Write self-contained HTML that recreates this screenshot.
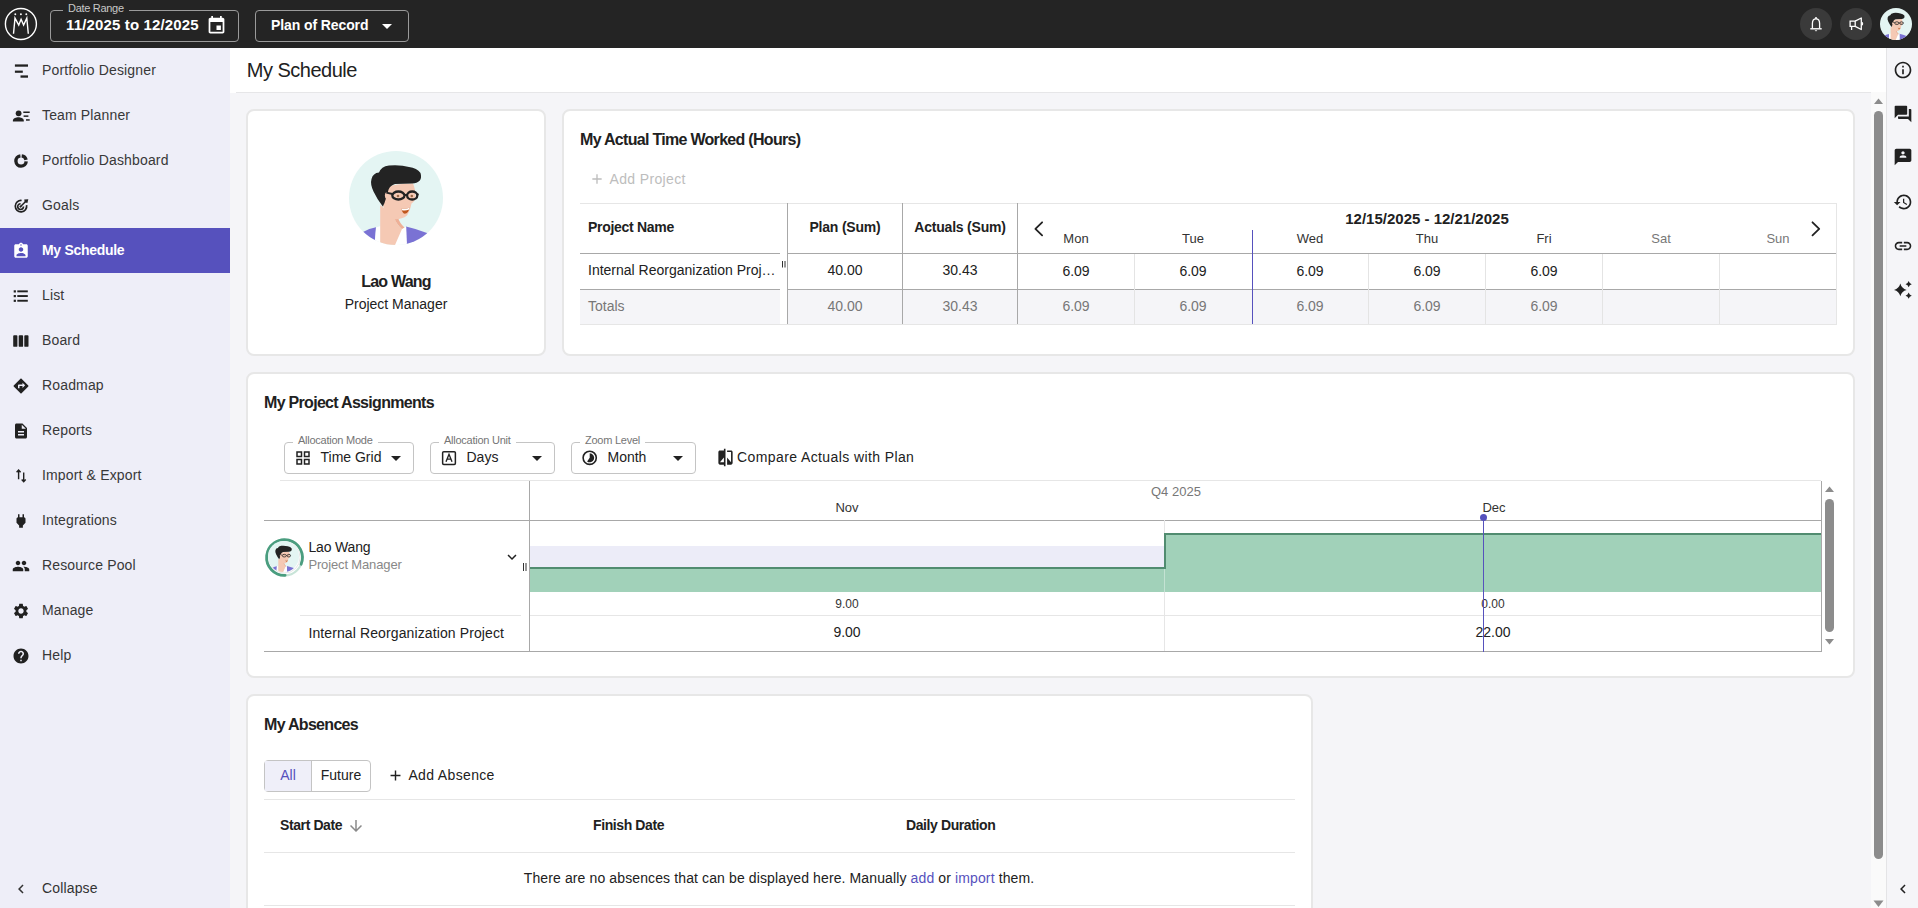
<!DOCTYPE html>
<html><head><meta charset="utf-8"><style>*{box-sizing:border-box;margin:0;padding:0}
html,body{width:1918px;height:908px;overflow:hidden;background:#f5f5f8;font-family:"Liberation Sans",sans-serif;color:#212121}
.a{position:absolute}
.t{position:absolute;line-height:1;white-space:nowrap}
svg{display:block;overflow:visible}
.card{position:absolute;background:#fff;border:2px solid #e7e7e7;border-radius:8px}
</style></head><body>
<div class="a" style="left:0px;top:0px;width:1918px;height:48px;background:#242424"></div>
<div class="a" style="left:0px;top:48px;width:230px;height:860px;background:#eeeef8"></div>
<div class="a" style="left:230px;top:48px;width:1656px;height:45px;background:#fff"></div>
<div class="a" style="left:236px;top:92px;width:1650px;height:1px;background:#e6e6e8"></div>
<div class="a" style="left:1886px;top:48px;width:32px;height:860px;background:#f5f5f8;border-left:1px solid #e4e4e6"></div>
<svg class="a" style="left:4px;top:7px;" width="34" height="34" viewBox="0 0 34 34"><circle cx="16.9" cy="17.06" r="15.5" fill="none" stroke="#fff" stroke-width="1.4"/><circle cx="11.3" cy="7.3" r="0.95" fill="#fff"/><circle cx="16.9" cy="7.3" r="0.95" fill="#fff"/><circle cx="22.3" cy="7.3" r="0.95" fill="#fff"/><path d="M9.5 26.7 L11 11.1 L14.75 18 L17.1 12.3 L19.6 18 L22.8 11.1 L24.3 26.7" fill="none" stroke="#fff" stroke-width="1.4" stroke-linejoin="miter"/></svg>
<div class="a" style="left:50px;top:10px;width:189px;height:32px;border:1px solid #9a9a9a;border-radius:4px"></div>
<div class="a" style="left:63px;top:2px;width:66px;height:12px;background:#242424"></div>
<div class="t" style="left:68px;top:2.69px;font-size:11px;color:#c8c8c8;letter-spacing:-0.3px">Date Range</div>
<div class="t" style="left:66px;top:16.80px;font-size:15px;font-weight:bold;color:#fff;letter-spacing:0.15px">11/2025 to 12/2025</div>
<svg class="a" style="left:206px;top:15px;" width="21" height="21" viewBox="0 0 24 24"><path fill="#fff" d="M17 12h-5v5h5v-5zM16 1v2H8V1H6v2H5c-1.11 0-1.99.9-1.99 2L3 19c0 1.1.89 2 2 2h14c1.1 0 2-.9 2-2V5c0-1.1-.9-2-2-2h-1V1h-2zm3 18H5V8h14v11z"/></svg>
<div class="a" style="left:255px;top:10px;width:154px;height:32px;border:1px solid #9a9a9a;border-radius:4px"></div>
<div class="t" style="left:271px;top:17.55px;font-size:14px;font-weight:bold;color:#fff;letter-spacing:-0.1px">Plan of Record</div>
<svg class="a" style="left:375px;top:14px;" width="24" height="24" viewBox="0 0 24 24"><path fill="#fff" d="M7 10l5 5 5-5z"/></svg>
<div class="a" style="left:1800px;top:8px;width:32px;height:32px;border-radius:50%;background:#3a3a3a"></div>
<div class="a" style="left:1840px;top:8px;width:32px;height:32px;border-radius:50%;background:#3a3a3a"></div>
<svg class="a" style="left:1800px;top:8px;" width="32" height="32" viewBox="0 0 32 32"><path d="M12.4 20.2 V15.6 C12.4 12.9 13.9 10.9 16 10.9 C18.1 10.9 19.6 12.9 19.6 15.6 V20.2" fill="none" stroke="#fff" stroke-width="1.3"/><path d="M10.3 20.8 H21.7" stroke="#fff" stroke-width="1.4"/><circle cx="16" cy="10" r="1" fill="#fff"/><path d="M14.6 22.3 H17.4 L16 23.6Z" fill="#fff"/></svg>
<svg class="a" style="left:1840px;top:8px;" width="32" height="32" viewBox="0 0 32 32"><path d="M10.1 13.2 H15.2 V18.3 H10.1Z" fill="none" stroke="#fff" stroke-width="1.3"/><path d="M15.2 13.2 L21.3 10 V21.5 L15.2 18.3" fill="none" stroke="#fff" stroke-width="1.3" stroke-linejoin="round"/><path d="M11.6 18.3 V22" stroke="#fff" stroke-width="1.3"/><path d="M22.3 14.2 Q23 15.75 22.3 17.3" fill="none" stroke="#fff" stroke-width="1.1"/></svg>
<svg class="a" style="left:1880px;top:8px;" width="32" height="32" viewBox="0 0 94 94"><circle cx="47" cy="47" r="47" fill="#e4f5f3"/>
<clipPath id="clipa1"><circle cx="47" cy="47" r="47"/></clipPath>
<g clip-path="url(#clipa1)">
<path d="M10 94 L14 81 Q20 77.5 27 76.3 L26 94Z" fill="#7a72d4"/>
<path d="M57 75.5 Q68 78 78 82 L86 94 L57 94Z" fill="#7a72d4"/>
<path d="M25.5 94 L27 76.5 L31.5 75 L31.5 94Z" fill="#fff"/>
<path d="M45.5 94 L52.5 77.8 L57.2 75.8 L58 94Z" fill="#fff"/>
<path d="M31.2 94 L31.2 54 L45.4 66 Q47.5 74 53 78 L46 94Z" fill="#f5c9b4"/>
<path d="M45 66 Q47.5 73.5 53 78 L55.5 76.6 Q50.5 72 49 66.5Z" fill="#eeb097"/>
<path d="M39 36 Q46 32.5 64 32.5 Q66.5 38 66.5 46 Q66 50 62.5 52.5 Q61 60 58 64.5 Q53 68.5 45.4 68.2 Q37 64 34 55Z" fill="#f5c9b4"/>
<path d="M33.8 55.5 Q28 48 24.5 40.5 Q21 33 22.5 28 Q24 22 30 21.5 Q32 15.5 40 14.4 Q52 13.5 60 16 Q68 17 71.5 22 Q73 27 70.8 29.5 Q68 32.5 63 32.6 L46 33 Q41 34.5 39.6 38.5 Q37.5 46 35.5 52Z" fill="#232323"/>
<ellipse cx="38.3" cy="44.5" rx="2.4" ry="3.6" fill="#f5c9b4"/>
<ellipse cx="49.4" cy="44.5" rx="6.1" ry="4" fill="none" stroke="#232323" stroke-width="2.3"/>
<ellipse cx="63.2" cy="44.5" rx="5.1" ry="4" fill="none" stroke="#232323" stroke-width="2.3"/>
<path d="M37.3 41.6 L43.5 43 M55.4 44 L58.2 44 M68.2 43.6 L69.6 43.1" stroke="#232323" stroke-width="1.9"/>
<circle cx="49" cy="45" r="1.3" fill="#9a6a48"/><circle cx="62.8" cy="45" r="1.3" fill="#9a6a48"/>
<path d="M52.3 57.2 Q56.5 58.6 60.6 56.6 Q59.6 62.5 55.8 62.8 Q53 62 52.3 57.2Z" fill="#c0571d"/>
<path d="M52.3 57.2 Q56.5 58.6 60.6 56.6 L60.2 58.6 Q56.5 60 52.9 59.2Z" fill="#fff"/>
</g></svg>
<svg class="a" style="left:12px;top:62px;" width="18" height="18" viewBox="0 0 18 18"><rect x="2.9" y="2.4" width="13.1" height="2.3" fill="#212121"/><rect x="2.9" y="8.6" width="7.9" height="2.2" fill="#212121"/><rect x="8.5" y="13.4" width="7.5" height="2.3" fill="#212121"/></svg>
<div class="t" style="left:42px;top:63.15px;font-size:14px;color:#383838;letter-spacing:0.15px">Portfolio Designer</div>
<svg class="a" style="left:12px;top:107px;" width="18" height="18" viewBox="0 0 18 18"><circle cx="6.6" cy="6.3" r="2.9" fill="#212121"/><path d="M0.9 14.6 V13.4 C0.9 11.4 4.3 10.3 6.4 10.3 C8.5 10.3 11.8 11.4 11.8 13.4 V14.6Z" fill="#212121"/><rect x="11.3" y="4.5" width="6.4" height="1.5" fill="#212121"/><rect x="11.6" y="8.4" width="4.8" height="1.5" fill="#212121"/><rect x="14" y="12.2" width="3.7" height="1.5" fill="#212121"/></svg>
<div class="t" style="left:42px;top:108.15px;font-size:14px;color:#383838;letter-spacing:0.15px">Team Planner</div>
<svg class="a" style="left:12px;top:152px;" width="18" height="18" viewBox="0 0 18 18"><path d="M14.19 9.31 A5.15 5.15 0 1 1 8.42 3.84" fill="none" stroke="#212121" stroke-width="3.4"/><path d="M9.68 3.84 A5.15 5.15 0 0 1 14.07 7.79" fill="none" stroke="#212121" stroke-width="3.4"/></svg>
<div class="t" style="left:42px;top:153.15px;font-size:14px;color:#383838;letter-spacing:0.15px">Portfolio Dashboard</div>
<svg class="a" style="left:12px;top:197px;" width="18" height="18" viewBox="0 0 18 18"><path d="M14.6 8.2 A5.7 5.7 0 1 1 9.6 3.5" fill="none" stroke="#212121" stroke-width="1.7"/><path d="M11.5 9.6 A2.9 2.9 0 1 1 8.6 6.7" fill="none" stroke="#212121" stroke-width="1.6"/><circle cx="8.5" cy="9.6" r="1.1" fill="#212121"/><path d="M8.6 9.5 L13.6 4.5" stroke="#212121" stroke-width="1.5"/><path d="M12.2 2.6 L12.8 5.3 L15.4 5.9 L16.3 2.2Z" fill="#212121"/></svg>
<div class="t" style="left:42px;top:198.15px;font-size:14px;color:#383838;letter-spacing:0.15px">Goals</div>
<div class="a" style="left:0px;top:228px;width:230px;height:45px;background:#5651bd"></div>
<svg class="a" style="left:12px;top:242px;" width="18" height="18" viewBox="0 0 24 24"><path fill="#fff" d="M19 3h-4.18C14.4 1.84 13.3 1 12 1c-1.3 0-2.4.84-2.82 2H5c-1.1 0-2 .9-2 2v14c0 1.1.9 2 2 2h14c1.1 0 2-.9 2-2V5c0-1.1-.9-2-2-2zm-7 0c.55 0 1 .45 1 1s-.45 1-1 1-1-.45-1-1 .45-1 1-1zm0 4c1.66 0 3 1.34 3 3s-1.34 3-3 3-3-1.34-3-3 1.34-3 3-3zm6 12H6v-1.4c0-2 4-3.1 6-3.1s6 1.1 6 3.1V19z"/></svg>
<div class="t" style="left:42px;top:243.15px;font-size:14px;color:#fff;font-weight:bold;letter-spacing:-0.3px">My Schedule</div>
<svg class="a" style="left:12px;top:287px;" width="18" height="18" viewBox="0 0 18 18"><rect x="1.7" y="3.3" width="2.2" height="2.2" fill="#212121"/><rect x="1.7" y="8" width="2.2" height="2.2" fill="#212121"/><rect x="1.7" y="12.7" width="2.2" height="2.2" fill="#212121"/><rect x="5.3" y="3.4" width="10.5" height="1.9" fill="#212121"/><rect x="5.3" y="8.1" width="10.5" height="1.9" fill="#212121"/><rect x="5.3" y="12.8" width="10.5" height="1.9" fill="#212121"/></svg>
<div class="t" style="left:42px;top:288.15px;font-size:14px;color:#383838;letter-spacing:0.15px">List</div>
<svg class="a" style="left:12px;top:332px;" width="18" height="18" viewBox="0 0 18 18"><rect x="1.2" y="3.2" width="4.2" height="11.6" rx="0.9" fill="#212121"/><rect x="6.7" y="3.2" width="4.4" height="11.6" rx="0.9" fill="#212121"/><rect x="12.3" y="3.2" width="4.2" height="11.6" rx="0.9" fill="#212121"/></svg>
<div class="t" style="left:42px;top:333.15px;font-size:14px;color:#383838;letter-spacing:0.15px">Board</div>
<svg class="a" style="left:12px;top:377px;" width="18" height="18" viewBox="0 0 24 24"><path fill="#212121" d="M21.71 11.29l-9-9c-.39-.39-1.02-.39-1.41 0l-9 9c-.39.39-.39 1.02 0 1.41l9 9c.39.39 1.02.39 1.41 0l9-9c.39-.38.39-1.01 0-1.41zM14 14.5V12h-4v3H8v-4c0-.55.45-1 1-1h5V7.5l3.5 3.5-3.5 3.5z"/></svg>
<div class="t" style="left:42px;top:378.15px;font-size:14px;color:#383838;letter-spacing:0.15px">Roadmap</div>
<svg class="a" style="left:12px;top:422px;" width="18" height="18" viewBox="0 0 24 24"><path fill="#212121" d="M14 2H6c-1.1 0-1.99.9-1.99 2L4 20c0 1.1.89 2 1.99 2H18c1.1 0 2-.9 2-2V8l-6-6zm2 16H8v-2h8v2zm0-4H8v-2h8v2zm-3-5V3.5L18.5 9H13z"/></svg>
<div class="t" style="left:42px;top:423.15px;font-size:14px;color:#383838;letter-spacing:0.15px">Reports</div>
<svg class="a" style="left:12px;top:467px;" width="18" height="18" viewBox="0 0 18 18"><path d="M6.6 12.3 V3.2 M4.6 5.3 L6.6 3.1 L8.6 5.3 M11.7 5.6 V14.6 M9.7 12.5 L11.7 14.7 L13.7 12.5" fill="none" stroke="#212121" stroke-width="1.4"/></svg>
<div class="t" style="left:42px;top:468.15px;font-size:14px;color:#383838;letter-spacing:0.15px">Import &amp; Export</div>
<svg class="a" style="left:12px;top:512px;" width="18" height="18" viewBox="0 0 24 24"><path fill="#212121" d="M16.01 7L16 3h-2v4h-4V3H8v4h-.01C7 6.99 6 7.99 6 8.99v5.49L9.5 18v3h5v-3l3.5-3.51v-5.5c0-1-1-2-1.99-1.99z"/></svg>
<div class="t" style="left:42px;top:513.15px;font-size:14px;color:#383838;letter-spacing:0.15px">Integrations</div>
<svg class="a" style="left:12px;top:557px;" width="18" height="18" viewBox="0 0 24 24"><path fill="#212121" d="M16 11c1.66 0 2.99-1.34 2.99-3S17.66 5 16 5c-1.66 0-3 1.34-3 3s1.34 3 3 3zm-8 0c1.66 0 2.99-1.34 2.99-3S9.66 5 8 5C6.34 5 5 6.34 5 8s1.34 3 3 3zm0 2c-2.33 0-7 1.17-7 3.5V19h14v-2.5c0-2.33-4.67-3.5-7-3.5zm8 0c-.29 0-.62.02-.97.05 1.16.84 1.97 1.97 1.97 3.45V19h6v-2.5c0-2.33-4.67-3.5-7-3.5z"/></svg>
<div class="t" style="left:42px;top:558.15px;font-size:14px;color:#383838;letter-spacing:0.15px">Resource Pool</div>
<svg class="a" style="left:12px;top:602px;" width="18" height="18" viewBox="0 0 24 24"><path fill="#212121" d="M19.14 12.94c.04-.3.06-.61.06-.94 0-.32-.02-.64-.07-.94l2.03-1.58c.18-.14.23-.41.12-.61l-1.92-3.32c-.12-.22-.37-.29-.59-.22l-2.39.96c-.5-.38-1.03-.7-1.62-.94l-.36-2.54c-.04-.24-.24-.41-.48-.41h-3.84c-.24 0-.43.17-.47.41l-.36 2.54c-.59.24-1.13.57-1.62.94l-2.39-.96c-.22-.08-.47 0-.59.22L2.74 8.87c-.12.21-.08.47.12.61l2.03 1.58c-.05.3-.09.63-.09.94s.02.64.07.94l-2.03 1.58c-.18.14-.23.41-.12.61l1.92 3.32c.12.22.37.29.59.22l2.39-.96c.5.38 1.03.7 1.62.94l.36 2.54c.05.24.24.41.48.41h3.84c.24 0 .44-.17.47-.41l.36-2.54c.59-.24 1.13-.56 1.62-.94l2.39.96c.22.08.47 0 .59-.22l1.92-3.32c.12-.22.07-.47-.12-.61l-2.01-1.58zM12 15.6c-1.98 0-3.6-1.62-3.6-3.6s1.62-3.6 3.6-3.6 3.6 1.62 3.6 3.6-1.62 3.6-3.6 3.6z"/></svg>
<div class="t" style="left:42px;top:603.15px;font-size:14px;color:#383838;letter-spacing:0.15px">Manage</div>
<svg class="a" style="left:12px;top:647px;" width="18" height="18" viewBox="0 0 24 24"><path fill="#212121" d="M12 2C6.48 2 2 6.48 2 12s4.48 10 10 10 10-4.48 10-10S17.52 2 12 2zm1 17h-2v-2h2v2zm2.07-7.75l-.9.92C13.45 12.9 13 13.5 13 15h-2v-.5c0-1.1.45-2.1 1.17-2.83l1.24-1.26c.37-.36.59-.86.59-1.41 0-1.1-.9-2-2-2s-2 .9-2 2H8c0-2.21 1.79-4 4-4s4 1.79 4 4c0 .88-.36 1.680-.93 2.25z"/></svg>
<div class="t" style="left:42px;top:648.15px;font-size:14px;color:#383838;letter-spacing:0.15px">Help</div>
<svg class="a" style="left:12px;top:880px;" width="18" height="18" viewBox="0 0 24 24"><path fill="#333" d="M15.41 7.41L14 6l-6 6 6 6 1.41-1.41L10.83 12z"/></svg>
<div class="t" style="left:42px;top:880.75px;font-size:14px;color:#333;letter-spacing:0.15px">Collapse</div>
<div class="t" style="left:246.8px;top:59.87px;font-size:20px;color:#212121;letter-spacing:-0.5px">My Schedule</div>
<div class="a" style="left:1871px;top:92px;width:15px;height:816px;background:#fafafa"></div>
<div class="a" style="left:1874px;top:111px;width:9px;height:748px;background:#8c8c8c;border-radius:5px"></div>
<svg class="a" style="left:1873px;top:97px;" width="11" height="8" viewBox="0 0 11 8"><path d="M1 7 L5.5 1.5 L10 7Z" fill="#8c8c8c"/></svg>
<svg class="a" style="left:1873px;top:900px;" width="11" height="8" viewBox="0 0 11 8"><path d="M0.5 0.5 L5.5 7 L10.5 0.5Z" fill="#8c8c8c"/></svg>
<svg class="a" style="left:1893px;top:60px;" width="20" height="20" viewBox="0 0 24 24"><path fill="#212121" d="M11 7h2v2h-2zm0 4h2v6h-2zm1-9C6.48 2 2 6.48 2 12s4.48 10 10 10 10-4.48 10-10S17.52 2 12 2zm0 18c-4.41 0-8-3.59-8-8s3.59-8 8-8 8 3.59 8 8-3.59 8-8 8z"/></svg>
<svg class="a" style="left:1893px;top:104px;" width="20" height="20" viewBox="0 0 24 24"><path fill="#212121" d="M21 6h-2v9H6v2c0 .55.45 1 1 1h11l4 4V7c0-.55-.45-1-1-1zm-4 6V3c0-.55-.45-1-1-1H3c-.55 0-1 .45-1 1v14l4-4h10c.55 0 1-.45 1-1z"/></svg>
<svg class="a" style="left:1893px;top:147px;" width="20" height="20" viewBox="0 0 24 24"><path fill="#212121" d="M20 2H4.01c-1.1 0-2 .9-2 2v18l4-4h14c1.1 0 2-.9 2-2V4c0-1.1-.9-2-2-2zm-8 3c1.1 0 2 .9 2 2s-.9 2-2 2-2-.9-2-2 .9-2 2-2zm4 8H8v-.57c0-.81.48-1.530 1.22-1.85.85-.37 1.79-.58 2.78-.58.99 0 1.93.21 2.78.58.74.32 1.22 1.04 1.22 1.85V13z"/></svg>
<svg class="a" style="left:1893px;top:192px;" width="20" height="20" viewBox="0 0 24 24"><path fill="#212121" d="M13 3c-4.97 0-9 4.03-9 9H1l3.89 3.89.07.14L9 12H6c0-3.87 3.13-7 7-7s7 3.13 7 7-3.13 7-7 7c-1.93 0-3.68-.79-4.94-2.060l-1.42 1.42C8.27 19.99 10.51 21 13 21c4.97 0 9-4.03 9-9s-4.03-9-9-9zm-1 5v5l4.28 2.54.72-1.21-3.5-2.08V8H12z"/></svg>
<svg class="a" style="left:1893px;top:236px;" width="20" height="20" viewBox="0 0 24 24"><path fill="#212121" d="M3.9 12c0-1.71 1.39-3.1 3.1-3.1h4V7H7c-2.76 0-5 2.24-5 5s2.24 5 5 5h4v-1.9H7c-1.71 0-3.1-1.39-3.1-3.1zM8 13h8v-2H8v2zm9-6h-4v1.9h4c1.71 0 3.1 1.39 3.1 3.1s-1.39 3.1-3.1 3.1h-4V17h4c2.76 0 5-2.24 5-5s-2.24-5-5-5z"/></svg>
<svg class="a" style="left:1888px;top:276px;" width="30" height="28" viewBox="0 0 30 28"><path fill="#212121" d="M12.33 7.60 Q13.59 12.64 18.63 13.90 Q13.59 15.16 12.33 20.20 Q11.07 15.16 6.03 13.90 Q11.07 12.64 12.33 7.60ZM20.66 5.07 Q21.34 7.49 23.76 8.17 Q21.34 8.85 20.66 11.27 Q19.98 8.85 17.56 8.17 Q19.98 7.49 20.66 5.07ZM20.66 16.60 Q21.34 19.02 23.76 19.70 Q21.34 20.38 20.66 22.80 Q19.98 20.38 17.56 19.70 Q19.98 19.02 20.66 16.60Z"/></svg>
<svg class="a" style="left:1894px;top:880px;" width="18" height="18" viewBox="0 0 24 24"><path fill="#212121" d="M15.41 7.41L14 6l-6 6 6 6 1.41-1.41L10.83 12z"/></svg>
<div class="card" style="left:246px;top:109px;width:300px;height:247px"></div>
<svg class="a" style="left:349px;top:151px;" width="94" height="94" viewBox="0 0 94 94"><circle cx="47" cy="47" r="47" fill="#e4f5f3"/>
<clipPath id="clipa2"><circle cx="47" cy="47" r="47"/></clipPath>
<g clip-path="url(#clipa2)">
<path d="M10 94 L14 81 Q20 77.5 27 76.3 L26 94Z" fill="#7a72d4"/>
<path d="M57 75.5 Q68 78 78 82 L86 94 L57 94Z" fill="#7a72d4"/>
<path d="M25.5 94 L27 76.5 L31.5 75 L31.5 94Z" fill="#fff"/>
<path d="M45.5 94 L52.5 77.8 L57.2 75.8 L58 94Z" fill="#fff"/>
<path d="M31.2 94 L31.2 54 L45.4 66 Q47.5 74 53 78 L46 94Z" fill="#f5c9b4"/>
<path d="M45 66 Q47.5 73.5 53 78 L55.5 76.6 Q50.5 72 49 66.5Z" fill="#eeb097"/>
<path d="M39 36 Q46 32.5 64 32.5 Q66.5 38 66.5 46 Q66 50 62.5 52.5 Q61 60 58 64.5 Q53 68.5 45.4 68.2 Q37 64 34 55Z" fill="#f5c9b4"/>
<path d="M33.8 55.5 Q28 48 24.5 40.5 Q21 33 22.5 28 Q24 22 30 21.5 Q32 15.5 40 14.4 Q52 13.5 60 16 Q68 17 71.5 22 Q73 27 70.8 29.5 Q68 32.5 63 32.6 L46 33 Q41 34.5 39.6 38.5 Q37.5 46 35.5 52Z" fill="#232323"/>
<ellipse cx="38.3" cy="44.5" rx="2.4" ry="3.6" fill="#f5c9b4"/>
<ellipse cx="49.4" cy="44.5" rx="6.1" ry="4" fill="none" stroke="#232323" stroke-width="2.3"/>
<ellipse cx="63.2" cy="44.5" rx="5.1" ry="4" fill="none" stroke="#232323" stroke-width="2.3"/>
<path d="M37.3 41.6 L43.5 43 M55.4 44 L58.2 44 M68.2 43.6 L69.6 43.1" stroke="#232323" stroke-width="1.9"/>
<circle cx="49" cy="45" r="1.3" fill="#9a6a48"/><circle cx="62.8" cy="45" r="1.3" fill="#9a6a48"/>
<path d="M52.3 57.2 Q56.5 58.6 60.6 56.6 Q59.6 62.5 55.8 62.8 Q53 62 52.3 57.2Z" fill="#c0571d"/>
<path d="M52.3 57.2 Q56.5 58.6 60.6 56.6 L60.2 58.6 Q56.5 60 52.9 59.2Z" fill="#fff"/>
</g></svg>
<div class="t" style="left:296.0px;width:200px;text-align:center;top:273.96px;font-size:16px;font-weight:bold;letter-spacing:-0.8px">Lao Wang</div>
<div class="t" style="left:296.0px;width:200px;text-align:center;top:296.75px;font-size:14px;color:#212121">Project Manager</div>
<div class="card" style="left:562px;top:109px;width:1293px;height:247px"></div>
<div class="t" style="left:580px;top:132.26px;font-size:16px;font-weight:bold;letter-spacing:-0.7px">My Actual Time Worked (Hours)</div>
<svg class="a" style="left:589px;top:171px;" width="16" height="16" viewBox="0 0 24 24"><path fill="#bdbdbd" d="M19 13h-6v6h-2v-6H5v-2h6V5h2v6h6v2z"/></svg>
<div class="t" style="left:609.5px;top:172.15px;font-size:14px;color:#bdbdbd;letter-spacing:0.35px">Add Project</div>
<div class="a" style="left:580px;top:203px;width:1257px;height:1px;background:#e6e6e6"></div>
<div class="a" style="left:580px;top:290px;width:200px;height:34px;background:#f5f5f8"></div>
<div class="a" style="left:788px;top:290px;width:1049px;height:34px;background:#f5f5f8"></div>
<div class="a" style="left:580px;top:253px;width:200px;height:1px;background:#a8a8a8"></div>
<div class="a" style="left:580px;top:289px;width:200px;height:1px;background:#a8a8a8"></div>
<div class="a" style="left:787px;top:253px;width:1050px;height:1px;background:#a8a8a8"></div>
<div class="a" style="left:787px;top:289px;width:1050px;height:1px;background:#a8a8a8"></div>
<div class="a" style="left:580px;top:324px;width:1257px;height:1px;background:#e6e6e6"></div>
<div class="a" style="left:787px;top:203px;width:1px;height:121px;background:#a8a8a8"></div>
<div class="a" style="left:902px;top:203px;width:1px;height:121px;background:#a8a8a8"></div>
<div class="a" style="left:1017px;top:203px;width:1px;height:121px;background:#a8a8a8"></div>
<div class="a" style="left:1836px;top:203px;width:1px;height:122px;background:#e6e6e6"></div>
<div class="a" style="left:1134px;top:254px;width:1px;height:70px;background:#e4e4e4"></div>
<div class="a" style="left:1368px;top:254px;width:1px;height:70px;background:#e4e4e4"></div>
<div class="a" style="left:1485px;top:254px;width:1px;height:70px;background:#e4e4e4"></div>
<div class="a" style="left:1602px;top:254px;width:1px;height:70px;background:#e4e4e4"></div>
<div class="a" style="left:1719px;top:254px;width:1px;height:70px;background:#e4e4e4"></div>
<div class="a" style="left:1252px;top:230px;width:1px;height:94px;background:#5651bd"></div>
<div class="t" style="left:588px;top:220.15px;font-size:14px;font-weight:bold;letter-spacing:-0.3px">Project Name</div>
<div class="t" style="left:745.0px;width:200px;text-align:center;top:220.15px;font-size:14px;font-weight:bold;letter-spacing:-0.2px">Plan (Sum)</div>
<div class="t" style="left:860.0px;width:200px;text-align:center;top:220.15px;font-size:14px;font-weight:bold;letter-spacing:-0.2px">Actuals (Sum)</div>
<div class="t" style="left:588px;top:263.15px;font-size:14px;">Internal Reorganization Proj…</div>
<svg class="a" style="left:782px;top:260.5px;" width="4" height="7" viewBox="0 0 4 7"><rect x="0" y="0" width="1" height="6.5" fill="#333"/><rect x="2.5" y="0" width="1" height="6.5" fill="#333"/></svg>
<div class="t" style="left:745.0px;width:200px;text-align:center;top:263.15px;font-size:14px;">40.00</div>
<div class="t" style="left:860.0px;width:200px;text-align:center;top:263.15px;font-size:14px;">30.43</div>
<div class="t" style="left:588px;top:299.15px;font-size:14px;color:#777">Totals</div>
<div class="t" style="left:745.0px;width:200px;text-align:center;top:299.15px;font-size:14px;color:#777">40.00</div>
<div class="t" style="left:860.0px;width:200px;text-align:center;top:299.15px;font-size:14px;color:#777">30.43</div>
<svg class="a" style="left:1026px;top:212px;" width="30" height="30" viewBox="0 0 30 30"><path d="M16.1 10.3 L9.4 16.9 L16.1 23.4" fill="none" stroke="#212121" stroke-width="1.8" stroke-linecap="round" stroke-linejoin="round"/></svg>
<svg class="a" style="left:1800px;top:212px;" width="30" height="30" viewBox="0 0 30 30"><path d="M12.5 10.3 L19.2 16.9 L12.5 23.4" fill="none" stroke="#212121" stroke-width="1.8" stroke-linecap="round" stroke-linejoin="round"/></svg>
<div class="t" style="left:1277.0px;width:300px;text-align:center;top:210.90px;font-size:15px;font-weight:bold">12/15/2025 - 12/21/2025</div>
<div class="t" style="left:976.0px;width:200px;text-align:center;top:232.20px;font-size:13px;color:#333">Mon</div>
<div class="t" style="left:976.0px;width:200px;text-align:center;top:264.15px;font-size:14px;">6.09</div>
<div class="t" style="left:976.0px;width:200px;text-align:center;top:299.15px;font-size:14px;color:#777">6.09</div>
<div class="t" style="left:1093.0px;width:200px;text-align:center;top:232.20px;font-size:13px;color:#333">Tue</div>
<div class="t" style="left:1093.0px;width:200px;text-align:center;top:264.15px;font-size:14px;">6.09</div>
<div class="t" style="left:1093.0px;width:200px;text-align:center;top:299.15px;font-size:14px;color:#777">6.09</div>
<div class="t" style="left:1210.0px;width:200px;text-align:center;top:232.20px;font-size:13px;color:#333">Wed</div>
<div class="t" style="left:1210.0px;width:200px;text-align:center;top:264.15px;font-size:14px;">6.09</div>
<div class="t" style="left:1210.0px;width:200px;text-align:center;top:299.15px;font-size:14px;color:#777">6.09</div>
<div class="t" style="left:1327.0px;width:200px;text-align:center;top:232.20px;font-size:13px;color:#333">Thu</div>
<div class="t" style="left:1327.0px;width:200px;text-align:center;top:264.15px;font-size:14px;">6.09</div>
<div class="t" style="left:1327.0px;width:200px;text-align:center;top:299.15px;font-size:14px;color:#777">6.09</div>
<div class="t" style="left:1444.0px;width:200px;text-align:center;top:232.20px;font-size:13px;color:#333">Fri</div>
<div class="t" style="left:1444.0px;width:200px;text-align:center;top:264.15px;font-size:14px;">6.09</div>
<div class="t" style="left:1444.0px;width:200px;text-align:center;top:299.15px;font-size:14px;color:#777">6.09</div>
<div class="t" style="left:1561.0px;width:200px;text-align:center;top:232.20px;font-size:13px;color:#777">Sat</div>
<div class="t" style="left:1678.0px;width:200px;text-align:center;top:232.20px;font-size:13px;color:#777">Sun</div>
<div class="card" style="left:246px;top:372px;width:1609px;height:306px"></div>
<div class="t" style="left:264px;top:394.76px;font-size:16px;font-weight:bold;letter-spacing:-0.7px">My Project Assignments</div>
<div class="a" style="left:284px;top:442px;width:130px;height:32px;border:1px solid #c4c4c4;border-radius:4px"></div><div class="a" style="left:293px;top:436px;width:84.5625px;height:8px;background:#fff"></div><div class="t" style="left:298px;top:434.59px;font-size:11px;color:#757575;letter-spacing:-0.25px">Allocation Mode</div><svg class="a" style="left:294px;top:449px;" width="18" height="18" viewBox="0 0 24 24"><path fill="#212121" d="M3 3v8h8V3H3zm6 6H5V5h4v4zm-6 4v8h8v-8H3zm6 6H5v-4h4v4zm4-16v8h8V3h-8zm6 6h-4V5h4v4zm-6 4v8h8v-8h-8zm6 6h-4v-4h4v4z"/></svg><div class="t" style="left:320.5px;top:450.35px;font-size:14px;color:#212121">Time Grid</div><svg class="a" style="left:383.5px;top:446.2px;" width="24" height="24" viewBox="0 0 24 24"><path fill="#212121" d="M7 10l5 5 5-5z"/></svg>
<div class="a" style="left:430px;top:442px;width:125px;height:32px;border:1px solid #c4c4c4;border-radius:4px"></div><div class="a" style="left:439px;top:436px;width:76.59375px;height:8px;background:#fff"></div><div class="t" style="left:444px;top:434.59px;font-size:11px;color:#757575;letter-spacing:-0.25px">Allocation Unit</div><svg class="a" style="left:440px;top:449px;" width="18" height="18" viewBox="0 0 24 24"><rect x="3.5" y="3.5" width="17" height="17" rx="1.5" fill="none" stroke="#212121" stroke-width="2"/><path d="M8 17 L12 7 L16 17 M9.5 13.5 H14.5" fill="none" stroke="#212121" stroke-width="1.8"/></svg><div class="t" style="left:466.5px;top:450.35px;font-size:14px;color:#212121">Days</div><svg class="a" style="left:524.5px;top:446.2px;" width="24" height="24" viewBox="0 0 24 24"><path fill="#212121" d="M7 10l5 5 5-5z"/></svg>
<div class="a" style="left:571px;top:442px;width:125px;height:32px;border:1px solid #c4c4c4;border-radius:4px"></div><div class="a" style="left:580px;top:436px;width:65.0px;height:8px;background:#fff"></div><div class="t" style="left:585px;top:434.59px;font-size:11px;color:#757575;letter-spacing:-0.25px">Zoom Level</div><svg class="a" style="left:581px;top:449px;" width="18" height="18" viewBox="0 0 18 18"><circle cx="8.7" cy="8.8" r="6.6" fill="none" stroke="#212121" stroke-width="1.6"/><path d="M8.7 8.8 L8.7 4.3 A4.5 4.5 0 1 1 6.12 12.49Z" fill="#212121"/></svg><div class="t" style="left:607.5px;top:450.35px;font-size:14px;color:#212121">Month</div><svg class="a" style="left:665.5px;top:446.2px;" width="24" height="24" viewBox="0 0 24 24"><path fill="#212121" d="M7 10l5 5 5-5z"/></svg>
<svg class="a" style="left:716px;top:448px;" width="19" height="19" viewBox="0 0 24 24"><path fill="#212121" d="M10 3H5c-1.11 0-2 .9-2 2v14c0 1.1.89 2 2 2h5v2h2V1h-2v2zm0 15H5l5-6v6zm9-15h-5v2h5v13l-5-6v9h5c1.1 0 2-.9 2-2V5c0-1.1-.9-2-2-2z"/></svg>
<div class="t" style="left:737px;top:449.95px;font-size:14px;color:#212121;letter-spacing:0.4px">Compare Actuals with Plan</div>
<div class="a" style="left:280px;top:480px;width:1541px;height:1px;background:#e6e6e6"></div>
<div class="a" style="left:529px;top:481px;width:1px;height:171px;background:#a8a8a8"></div>
<div class="a" style="left:264px;top:520px;width:1557px;height:1px;background:#a8a8a8"></div>
<div class="a" style="left:264px;top:651px;width:1557px;height:1px;background:#a8a8a8"></div>
<div class="a" style="left:1821px;top:481px;width:1px;height:171px;background:#a8a8a8"></div>
<div class="t" style="left:1151px;top:485.30px;font-size:13px;color:#777">Q4 2025</div>
<div class="t" style="left:747.0px;width:200px;text-align:center;top:500.80px;font-size:13px;color:#333">Nov</div>
<div class="t" style="left:1394.0px;width:200px;text-align:center;top:500.50px;font-size:13px;color:#333">Dec</div>
<div class="a" style="left:530px;top:546px;width:634px;height:21px;background:#ececf8"></div>
<div class="a" style="left:530px;top:567px;width:634px;height:25px;background:#a1d1b9;border-top:2px solid #518c70"></div>
<div class="a" style="left:1164px;top:533px;width:657px;height:59px;background:#a1d1b9;border-top:2px solid #518c70"></div>
<div class="a" style="left:1164px;top:520px;width:1px;height:131px;background:#e6e6e6"></div>
<div class="a" style="left:1164px;top:567px;width:1px;height:25px;background:#c4e2d3"></div>
<div class="a" style="left:1164px;top:533px;width:2px;height:36px;background:#518c70"></div>
<div class="a" style="left:300px;top:615px;width:221px;height:1px;background:#e6e6e6"></div>
<div class="a" style="left:530px;top:615px;width:1291px;height:1px;background:#e6e6e6"></div>
<div class="t" style="left:747.0px;width:200px;text-align:center;top:597.74px;font-size:12px;color:#333">9.00</div>
<div class="t" style="left:1393.0px;width:200px;text-align:center;top:597.74px;font-size:12px;color:#333">0.00</div>
<div class="t" style="left:747.0px;width:200px;text-align:center;top:625.45px;font-size:14px;">9.00</div>
<div class="t" style="left:1393.0px;width:200px;text-align:center;top:625.45px;font-size:14px;">22.00</div>
<div class="a" style="left:1483px;top:517px;width:1px;height:135px;background:#5651bd"></div>
<div class="a" style="left:1480px;top:514px;width:7px;height:7px;background:#5651bd;border-radius:50%"></div>
<svg class="a" style="left:264.5px;top:537.5px;" width="39" height="39" viewBox="0 0 39 39"><circle cx="19.5" cy="19.5" r="19" fill="#fff"/><circle cx="19.5" cy="19.5" r="17.9" fill="none" stroke="#c8e4d8" stroke-width="2.2"/><path d="M20.12 37.39 A17.9 17.9 0 1 1 36.10 26.21" fill="none" stroke="#4a9d7f" stroke-width="2.8" stroke-linecap="round"/><circle cx="19.5" cy="19.5" r="15.6" fill="none" stroke="#e0e0e0" stroke-width="0.8"/></svg>
<svg class="a" style="left:268px;top:541px;" width="31" height="31" viewBox="0 0 94 94"><circle cx="47" cy="47" r="47" fill="#e4f5f3"/>
<clipPath id="clipa3"><circle cx="47" cy="47" r="47"/></clipPath>
<g clip-path="url(#clipa3)">
<path d="M10 94 L14 81 Q20 77.5 27 76.3 L26 94Z" fill="#7a72d4"/>
<path d="M57 75.5 Q68 78 78 82 L86 94 L57 94Z" fill="#7a72d4"/>
<path d="M25.5 94 L27 76.5 L31.5 75 L31.5 94Z" fill="#fff"/>
<path d="M45.5 94 L52.5 77.8 L57.2 75.8 L58 94Z" fill="#fff"/>
<path d="M31.2 94 L31.2 54 L45.4 66 Q47.5 74 53 78 L46 94Z" fill="#f5c9b4"/>
<path d="M45 66 Q47.5 73.5 53 78 L55.5 76.6 Q50.5 72 49 66.5Z" fill="#eeb097"/>
<path d="M39 36 Q46 32.5 64 32.5 Q66.5 38 66.5 46 Q66 50 62.5 52.5 Q61 60 58 64.5 Q53 68.5 45.4 68.2 Q37 64 34 55Z" fill="#f5c9b4"/>
<path d="M33.8 55.5 Q28 48 24.5 40.5 Q21 33 22.5 28 Q24 22 30 21.5 Q32 15.5 40 14.4 Q52 13.5 60 16 Q68 17 71.5 22 Q73 27 70.8 29.5 Q68 32.5 63 32.6 L46 33 Q41 34.5 39.6 38.5 Q37.5 46 35.5 52Z" fill="#232323"/>
<ellipse cx="38.3" cy="44.5" rx="2.4" ry="3.6" fill="#f5c9b4"/>
<ellipse cx="49.4" cy="44.5" rx="6.1" ry="4" fill="none" stroke="#232323" stroke-width="2.3"/>
<ellipse cx="63.2" cy="44.5" rx="5.1" ry="4" fill="none" stroke="#232323" stroke-width="2.3"/>
<path d="M37.3 41.6 L43.5 43 M55.4 44 L58.2 44 M68.2 43.6 L69.6 43.1" stroke="#232323" stroke-width="1.9"/>
<circle cx="49" cy="45" r="1.3" fill="#9a6a48"/><circle cx="62.8" cy="45" r="1.3" fill="#9a6a48"/>
<path d="M52.3 57.2 Q56.5 58.6 60.6 56.6 Q59.6 62.5 55.8 62.8 Q53 62 52.3 57.2Z" fill="#c0571d"/>
<path d="M52.3 57.2 Q56.5 58.6 60.6 56.6 L60.2 58.6 Q56.5 60 52.9 59.2Z" fill="#fff"/>
</g></svg>
<div class="t" style="left:308.4px;top:539.75px;font-size:14px;color:#212121;letter-spacing:-0.15px">Lao Wang</div>
<div class="t" style="left:308.4px;top:558.00px;font-size:13px;color:#888;letter-spacing:-0.14px">Project Manager</div>
<svg class="a" style="left:503px;top:548px;" width="18" height="18" viewBox="0 0 24 24"><path fill="#212121" d="M16.59 8.59L12 13.17 7.41 8.59 6 10l6 6 6-6z"/></svg>
<svg class="a" style="left:523px;top:563px;" width="4" height="8" viewBox="0 0 4 8"><rect x="0" y="0" width="1" height="8" fill="#333"/><rect x="2.5" y="0" width="1" height="8" fill="#333"/></svg>
<div class="t" style="left:308.4px;top:625.95px;font-size:14px;letter-spacing:0.11px">Internal Reorganization Project</div>
<div class="a" style="left:1825px;top:499px;width:9px;height:133px;background:#8c8c8c;border-radius:5px"></div>
<svg class="a" style="left:1824px;top:485px;" width="11" height="8" viewBox="0 0 11 8"><path d="M1 7 L5.5 1.5 L10 7Z" fill="#8c8c8c"/></svg>
<svg class="a" style="left:1824px;top:638px;" width="11" height="8" viewBox="0 0 11 8"><path d="M1 1 L5.5 6.5 L10 1Z" fill="#8c8c8c"/></svg>
<div class="card" style="left:246px;top:694px;width:1067px;height:240px"></div>
<div class="t" style="left:264px;top:716.96px;font-size:16px;font-weight:bold;letter-spacing:-0.7px">My Absences</div>
<div class="a" style="left:264px;top:760px;width:107px;height:32px;border:1px solid #c4c4c4;border-radius:4px"></div>
<div class="a" style="left:265px;top:761px;width:46px;height:30px;background:#efeff9"></div>
<div class="a" style="left:311px;top:761px;width:1px;height:30px;background:#c4c4c4"></div>
<div class="t" style="left:188.0px;width:200px;text-align:center;top:768.15px;font-size:14px;color:#5651bd">All</div>
<div class="t" style="left:241.0px;width:200px;text-align:center;top:768.15px;font-size:14px;color:#212121">Future</div>
<svg class="a" style="left:387px;top:767px;" width="17" height="17" viewBox="0 0 24 24"><path fill="#212121" d="M19 13h-6v6h-2v-6H5v-2h6V5h2v6h6v2z"/></svg>
<div class="t" style="left:408.4px;top:768.15px;font-size:14px;letter-spacing:0.35px">Add Absence</div>
<div class="a" style="left:264px;top:799px;width:1031px;height:1px;background:#e6e6e6"></div>
<div class="t" style="left:280px;top:818.15px;font-size:14px;font-weight:bold;letter-spacing:-0.4px">Start Date</div>
<svg class="a" style="left:347px;top:817px;" width="18" height="18" viewBox="0 0 24 24"><path fill="#8a8a8a" d="M20 12l-1.41-1.41L13 16.17V4h-2v12.17l-5.58-5.59L4 12l8 8 8-8z"/></svg>
<div class="t" style="left:593px;top:818.15px;font-size:14px;font-weight:bold;letter-spacing:-0.4px">Finish Date</div>
<div class="t" style="left:906px;top:818.15px;font-size:14px;font-weight:bold;letter-spacing:-0.4px">Daily Duration</div>
<div class="a" style="left:264px;top:852px;width:1031px;height:1px;background:#e6e6e6"></div>
<div class="t" style="left:479.0px;width:600px;text-align:center;top:871.15px;font-size:14px;letter-spacing:0.12px">There are no absences that can be displayed here. Manually <span style="color:#5651bd">add</span> or <span style="color:#5651bd">import</span> them.</div>
<div class="a" style="left:264px;top:905px;width:1031px;height:1px;background:#e6e6e6"></div>
</body></html>
